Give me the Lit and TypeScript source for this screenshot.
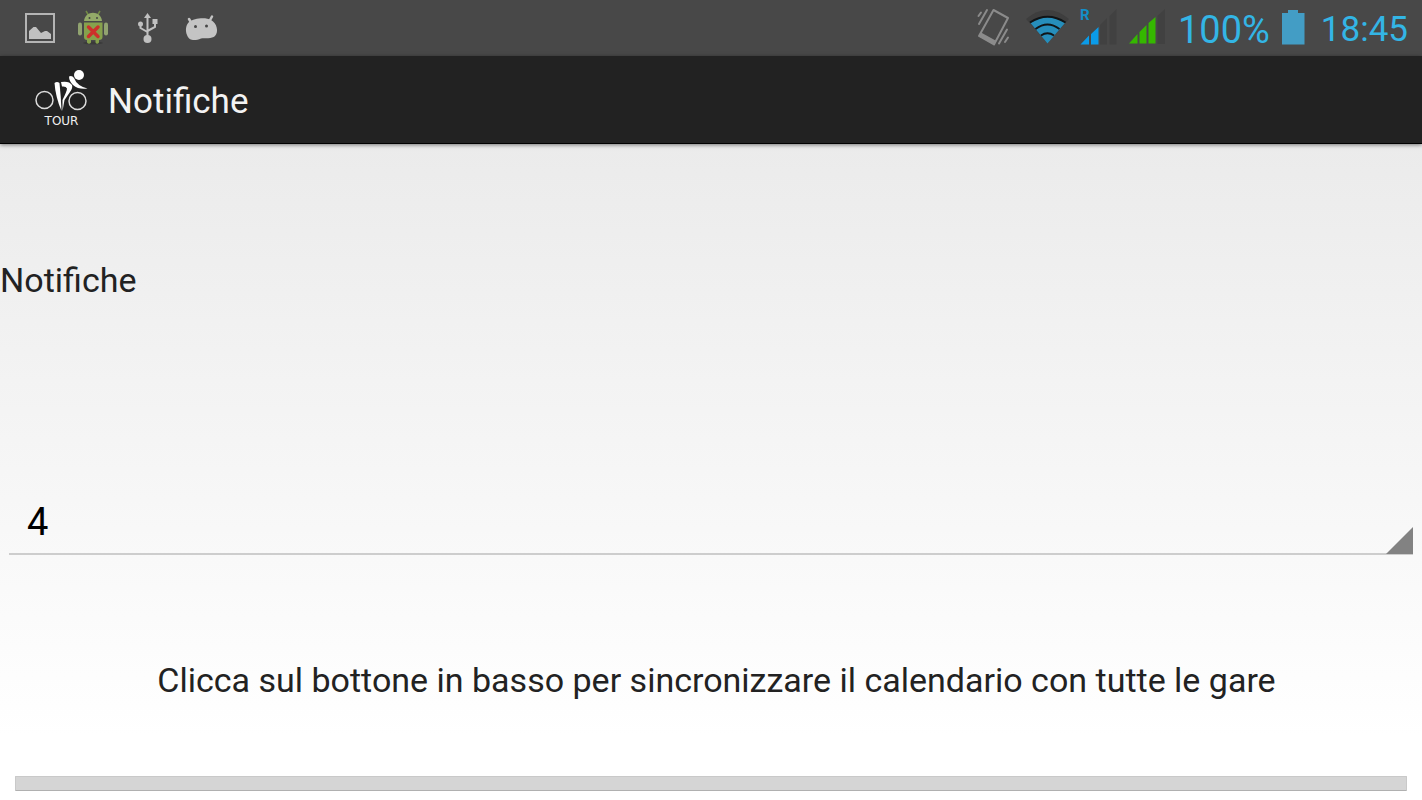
import { LitElement, html, css } from "lit";
import { customElement, state } from "lit/decorators.js";

@customElement("status-bar")
class StatusBar extends LitElement {
  static styles = css`
    :host {
      display: flex;
      justify-content: space-between;
      height: 56px;
      box-sizing: border-box;
      padding: 0 14px 0 24px;
      background: #484848;
      color: #33b5e5;
    }
    .group {
      display: flex;
      align-items: center;
    }
    .left {
      gap: 22px;
    }
    .right {
      gap: 12px;
    }
    svg {
      display: block;
      flex: none;
    }
    .battery-level {
      font-size: 38px;
      line-height: 52px;
      padding-top: 4px;
    }
    .clock {
      font-size: 35px;
      line-height: 52px;
      padding-top: 4px;
      margin-left: 4px;
    }
  `;

  render() {
    return html`
      <div class="group left">
        <svg width="32" height="56" viewBox="24 0 32 56" aria-hidden="true">
          <rect x="26" y="14" width="28" height="28" fill="none" stroke="#b4b4b4" stroke-width="2" />
          <path d="M29 39V31L33.500 27H36L41 33L45 31H47L51 34V39Z" fill="#c0c0c0" />
        </svg>
        <svg width="32" height="56" viewBox="78 0 32 56" aria-hidden="true">
          <ellipse cx="93" cy="43" rx="10" ry="1.500" fill="#3a3a3a" />
          <path d="M86 11L89 16M100 11L97 16" stroke="#728b45" stroke-width="1.500" />
          <path d="M84 21C85 10 101 10 102 21Z" fill="#93aa68" />
          <circle cx="89.500" cy="18" r="1" fill="#444" /><circle cx="97" cy="18" r="1" fill="#444" />
          <path d="M84 22.500H102.500V37Q102.500 40 99 40V42.500Q97 45 95.500 42.500V40H91V42.500Q89 45 87 42.500V40Q84 40 84 37Z" fill="#86a14c" />
          <rect x="78" y="22.500" width="4" height="13" rx="2" fill="#91a370" />
          <rect x="104" y="22.500" width="4" height="13" rx="2" fill="#91a370" />
          <path d="M88.500 27L98 36.500M98 27L88.500 36.500" stroke="#cc302b" stroke-width="3.500" stroke-linecap="round" />
        </svg>
        <svg width="32" height="56" viewBox="132 0 32 56" aria-hidden="true">
          <g fill="none" stroke="#c0c0c0" stroke-width="2">
            <path d="M147.500 17V37M140.500 24V28L147.500 32M155 23V27L147.500 31" />
          </g>
          <g fill="#c0c0c0">
            <path d="M147.500 13L151 18H144Z" />
            <circle cx="140.500" cy="24" r="2.500" />
            <rect x="152.500" y="19" width="5" height="5" />
            <circle cx="147.500" cy="39" r="4" />
          </g>
        </svg>
        <svg width="34" height="56" viewBox="186 0 34 56" overflow="visible" aria-hidden="true">
          <path d="M189 19L192 24M212 16.500L209 22" stroke="#c4c4c4" stroke-width="2.500" stroke-linecap="round" />
          <path d="M189 22C194 18 206 17 211 20C217 23 219 32 215 36C212 39 205 38 201 38.500C195 41 189 41 187 35C185 30 186 25 189 22Z" fill="#c4c4c4" />
          <circle cx="195.500" cy="26.500" r="1.500" fill="#484848" /><circle cx="206.500" cy="26" r="1.500" fill="#484848" />
        </svg>
      </div>
      <div class="group right">
        <svg width="36" height="56" viewBox="977 0 36 56" aria-hidden="true">
          <g fill="none" stroke="#8b8b8b" stroke-width="2" stroke-linecap="round" stroke-linejoin="round">
            <path d="M994.500 10L1009 18L995 44.500L980 36Z" />
            <path d="M979.500 16L982 12.500M980 24L988 10M1000 43.500L1008 29.500M1006 42L1009 37.500" />
          </g>
          <path d="M982 32.500L996.500 40.500L994.500 44.500L980 36.500Z" fill="#8b8b8b" />
        </svg>
        <svg width="44" height="56" viewBox="1024 0 44 56" overflow="visible" aria-hidden="true">
          <path d="M1026 19Q1047.500 1 1069 19L1047.500 43.500Z" fill="#3e3e3e" />
          <path d="M1030.500 23Q1047.500 10 1065 23L1047.500 43.500Z" fill="#268ebb" />
          <path d="M1030 22.500Q1047.500 11 1065.500 22.500M1035.500 29Q1047.500 20 1059.500 29M1041 35.500Q1047.500 31 1054 35.500" fill="none" stroke="#101416" stroke-width="2" />
        </svg>
        <svg width="37" height="56" viewBox="1080 0 37 56" aria-label="R">
          <path d="M1100 25L1107 18V44.500H1100ZM1109.500 16L1116.500 9V44.500H1109.500Z" fill="#414141" />
          <path d="M1080.500 44.500L1089 35.500V44.500ZM1091 34L1098.500 27V44.500H1091Z" fill="#0b9be8" />
          <text x="1080" y="20" fill="#138fc9" font-size="15" font-weight="700">R</text>
        </svg>
        <svg width="37" height="56" viewBox="1129 0 37 56" aria-hidden="true">
          <path d="M1157.500 16L1165 9V44H1157.500Z" fill="#414141" />
          <path d="M1129 43.500L1137.500 34V43.500ZM1139.500 32L1146.500 25V43.500H1139.500ZM1148.500 23L1155.500 17V43.500H1148.500Z" fill="#35b800" />
        </svg>
        <span class="battery-level">100%</span>
        <svg width="23" height="56" viewBox="1282 0 23 56" aria-hidden="true">
          <path d="M1282 13H1288V10H1298V13H1304.500V44.500H1282Z" fill="#439dc5" />
        </svg>
        <span class="clock">18:45</span>
      </div>
    `;
  }
}

@customElement("title-bar")
class TitleBar extends LitElement {
  static styles = css`
    :host {
      display: flex;
      align-items: center;
      gap: 18px;
      height: 88px;
      box-sizing: border-box;
      padding: 0 34px;
      background: #222;
      border-bottom: 1px solid #000;
      box-shadow: 0 1px 4px rgba(0, 0, 0, 0.5);
      position: relative;
      color: #f3f3f3;
    }
    svg {
      display: block;
      flex: none;
    }
    h1 {
      margin: 0;
      padding-top: 4px;
      font-size: 35px;
      line-height: 44px;
      font-weight: 400;
    }
  `;

  render() {
    return html`
      <svg width="56" height="64" viewBox="34 68 56 64" role="img" aria-label="Tour">
        <g fill="none" stroke="#dcdcdc" stroke-width="1.500">
          <circle cx="44.500" cy="100" r="8.500" />
          <circle cx="77.500" cy="101" r="8.500" />
        </g>
        <g fill="#fff">
          <circle cx="79" cy="75" r="5" />
          <path d="M69 76.500Q72 75 74 78Q77 86 87.500 88.500Q79 90 73 85Q69 81 69 76.500Z" />
          <path d="M54.500 83Q57 81 59.500 83Q61 97 61.500 111Q55.500 97 54.500 83Z" />
          <path d="M61 82Q69 80.500 72 85Q73 88 70 92L64.500 100L62.500 111L62.500 100Q67 91 67 88.500Q66 86 62 86.500Z" />
        </g>
        <text x="61.500" y="125" text-anchor="middle" font-family="DejaVu Sans, sans-serif" font-size="12" fill="#f0f0f0">TOUR</text>
      </svg>
      <h1>Notifiche</h1>
    `;
  }
}

@customElement("app-root")
class AppRoot extends LitElement {
  @state() private count = "4";

  static styles = css`
    :host {
      display: flex;
      flex-direction: column;
      min-height: 100vh;
      box-sizing: border-box;
      font-family: Roboto, sans-serif;
      color: #222;
      background: linear-gradient(#ebebeb 144px, #fff 92%);
    }
    main {
      display: flex;
      flex-direction: column;
      padding-top: 116px;
    }
    label,
    p {
      margin: 0;
      font-size: 34px;
      line-height: 40px;
    }
    .field {
      position: relative;
      margin: 188px 9px 0;
    }
    select {
      display: block;
      width: 100%;
      height: 67px;
      box-sizing: border-box;
      padding: 2px 18px 0;
      appearance: none;
      border: 0;
      border-bottom: 2px solid #cdcdcd;
      border-radius: 0;
      background: transparent;
      color: #000;
      font-family: inherit;
      font-size: 38px;
    }
    .corner {
      position: absolute;
      right: 0;
      bottom: 1px;
      pointer-events: none;
    }
    p {
      margin-top: 105px;
      padding: 0 11px 0 22px;
      text-align: center;
    }
    button {
      height: 15px;
      margin: 76px 15px 9px;
      padding: 0;
      border: 1px solid #c9c9c9;
      border-bottom-color: #b0b0b0;
      border-radius: 1px;
      background: #d5d5d5;
    }
  `;

  render() {
    return html`
      <status-bar></status-bar>
      <title-bar></title-bar>
      <main>
        <label for="count">Notifiche</label>
        <div class="field">
          <select
            id="count"
            @change=${(e: Event) => (this.count = (e.target as HTMLSelectElement).value)}
          >
            <option value="4" ?selected=${this.count === "4"}>4</option>
          </select>
          <svg class="corner" width="27" height="27" viewBox="0 0 27 27" aria-hidden="true">
            <path d="M27 0V27H0Z" fill="#828282" />
          </svg>
        </div>
        <p id="hint">Clicca sul bottone in basso per sincronizzare il calendario con tutte le gare</p>
        <button type="button" aria-labelledby="hint"></button>
      </main>
    `;
  }
}
